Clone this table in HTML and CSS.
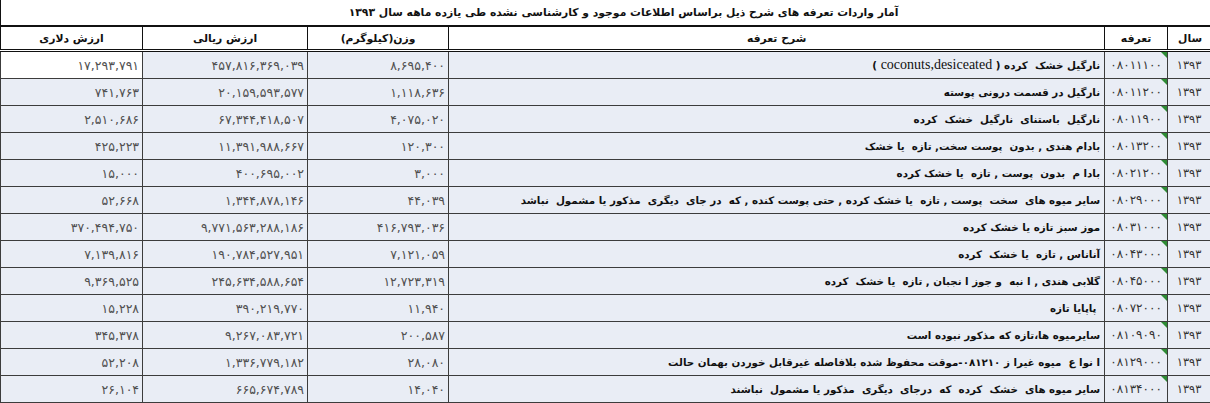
FILE: index.html
```html
<!DOCTYPE html>
<html lang="fa">
<head>
<meta charset="utf-8">
<link rel="stylesheet" href="styles.css">
</head>
<body>
<table class="sheet" dir="rtl">
  <colgroup>
    <col class="c-year"><col class="c-code"><col class="c-desc"><col class="c-weight"><col class="c-rial"><col class="c-usd">
  </colgroup>
  <thead>
    <tr class="title-row"><th colspan="6" class="title">آمار واردات تعرفه های شرح ذیل براساس اطلاعات موجود و کارشناسی نشده طی یازده ماهه سال ۱۳۹۳</th></tr>
    <tr class="head-row">
      <th class="h-year">سال</th>
      <th>تعرفه</th>
      <th>شرح تعرفه</th>
      <th>وزن(کیلوگرم)</th>
      <th>ارزش ریالی</th>
      <th>ارزش دلاری</th>
    </tr>
  </thead>
  <tbody>
    <tr><td class="year">۱۳۹۳</td><td class="code">۰۸۰۱۱۱۰۰</td><td class="desc">نارگیل خشک  کرده ( <span class="latin">coconuts,desiceated</span> )</td><td class="num">۸,۶۹۵,۴۰۰</td><td class="num">۴۵۷,۸۱۶,۳۶۹,۰۳۹</td><td class="num sel">۱۷,۲۹۳,۷۹۱</td></tr>
    <tr><td class="year">۱۳۹۳</td><td class="code">۰۸۰۱۱۲۰۰</td><td class="desc">نارگیل در قسمت درونی پوسته</td><td class="num">۱,۱۱۸,۶۳۶</td><td class="num">۲۰,۱۵۹,۵۹۳,۵۷۷</td><td class="num">۷۴۱,۷۶۳</td></tr>
    <tr><td class="year">۱۳۹۳</td><td class="code">۰۸۰۱۱۹۰۰</td><td class="desc">نارگیل  باستنای  نارگیل  خشک  کرده</td><td class="num">۴,۰۷۵,۰۲۰</td><td class="num">۶۷,۳۴۴,۴۱۸,۵۰۷</td><td class="num">۲,۵۱۰,۶۸۶</td></tr>
    <tr><td class="year">۱۳۹۳</td><td class="code">۰۸۰۱۳۲۰۰</td><td class="desc">بادام هندی , بدون  پوست سخت, تازه  یا خشک</td><td class="num">۱۲۰,۳۰۰</td><td class="num">۱۱,۳۹۱,۹۸۸,۶۶۷</td><td class="num">۴۲۵,۲۲۳</td></tr>
    <tr><td class="year">۱۳۹۳</td><td class="code">۰۸۰۲۱۲۰۰</td><td class="desc">بادا م  بدون  پوست , تازه  یا خشک کرده</td><td class="num">۳,۰۰۰</td><td class="num">۴۰۰,۶۹۵,۰۰۲</td><td class="num">۱۵,۰۰۰</td></tr>
    <tr><td class="year">۱۳۹۳</td><td class="code">۰۸۰۲۹۰۰۰</td><td class="desc">سایر میوه های  سخت  پوست , تازه  یا خشک کرده , حتی پوست کنده , که  در جای  دیگری  مذکور یا مشمول  نباشد</td><td class="num">۴۴,۰۳۹</td><td class="num">۱,۳۴۴,۸۷۸,۱۴۶</td><td class="num">۵۲,۶۶۸</td></tr>
    <tr><td class="year">۱۳۹۳</td><td class="code">۰۸۰۳۱۰۰۰</td><td class="desc">موز سبز تازه یا خشک کرده</td><td class="num">۴۱۶,۷۹۳,۰۳۶</td><td class="num">۹,۷۷۱,۵۶۳,۲۸۸,۱۸۶</td><td class="num">۳۷۰,۴۹۴,۷۵۰</td></tr>
    <tr><td class="year">۱۳۹۳</td><td class="code">۰۸۰۴۳۰۰۰</td><td class="desc">آناناس , تازه  یا خشک  کرده</td><td class="num">۷,۱۲۱,۰۵۹</td><td class="num">۱۹۰,۷۸۴,۵۲۷,۹۵۱</td><td class="num">۷,۱۳۹,۸۱۶</td></tr>
    <tr><td class="year">۱۳۹۳</td><td class="code">۰۸۰۴۵۰۰۰</td><td class="desc">گلابی هندی , ا نبه  و جوز ا نجبان , تازه  یا خشک  کرده</td><td class="num">۱۲,۷۲۳,۳۱۹</td><td class="num">۲۴۵,۶۳۴,۵۸۸,۶۵۴</td><td class="num">۹,۳۶۹,۵۲۵</td></tr>
    <tr><td class="year">۱۳۹۳</td><td class="code">۰۸۰۷۲۰۰۰</td><td class="desc"> پاپایا تازه</td><td class="num">۱۱,۹۴۰</td><td class="num">۳۹۰,۲۱۹,۷۷۰</td><td class="num">۱۵,۲۲۸</td></tr>
    <tr><td class="year">۱۳۹۳</td><td class="code">۰۸۱۰۹۰۹۰</td><td class="desc">سایرمیوه ها،تازه که مذکور نبوده است</td><td class="num">۲۰۰,۵۸۷</td><td class="num">۹,۲۶۷,۰۸۳,۷۲۱</td><td class="num">۳۴۵,۳۷۸</td></tr>
    <tr><td class="year">۱۳۹۳</td><td class="code">۰۸۱۲۹۰۰۰</td><td class="desc">ا نوا ع  میوه غیرا ز ۰۸۱۲۱۰-موقت محفوظ شده بلافاصله غیرقابل خوردن بهمان حالت</td><td class="num">۲۸,۰۸۰</td><td class="num">۱,۳۳۶,۷۷۹,۱۸۲</td><td class="num">۵۲,۲۰۸</td></tr>
    <tr><td class="year">۱۳۹۳</td><td class="code">۰۸۱۳۴۰۰۰</td><td class="desc">سایر میوه های  خشک  کرده  که  درجای  دیگری  مذکور یا مشمول  نباشند</td><td class="num">۱۴,۰۴۰</td><td class="num">۶۶۵,۶۷۴,۷۸۹</td><td class="num">۲۶,۱۰۴</td></tr>
  </tbody>
</table>
</body>
</html>
```

FILE: styles.css
```css
html, body {
  margin: 0;
  padding: 0;
  background: #ffffff;
}
body {
  font-family: "DejaVu Sans", "Noto Sans", sans-serif;
  font-size: 11px;
  color: #222;
  overflow: hidden;
}
.sheet {
  width: 1210px;
  border-collapse: collapse;
  table-layout: fixed;
}
.c-year { width: 43px; }
.c-code { width: 63px; }
.c-desc { width: 656px; }
.c-weight { width: 141px; }
.c-rial { width: 165px; }
.c-usd { width: 142px; }

.title-row th {
  height: 25px;
  padding: 0 0 0 36px;
  font-weight: bold;
  font-size: 10.8px;
  color: #111;
  text-align: center;
  border-left: 1px solid #111;
  border-right: 1px solid #111;
  border-bottom: 2px solid #111;
  background: #fff;
  white-space: nowrap;
}
.head-row th {
  height: 22px;
  padding: 0 4px;
  font-weight: bold;
  font-size: 10.8px;
  color: #111;
  text-align: center;
  border: 1px solid #111;
  border-bottom: 3px double #111;
  background: #fff;
}
.head-row .h-year {
  text-align: right;
  padding-right: 8px;
}
tbody td {
  height: 26px;
  padding: 0 4px;
  border: 1px solid #3c3c3c;
  background: #e9edf5;
  white-space: nowrap;
  overflow: hidden;
  vertical-align: middle;
}
tbody td.sel {
  background: #ffffff;
}
.num {
  text-align: right;
  direction: ltr;
  color: #505050;
  font-size: 12.5px;
  letter-spacing: 1.2px;
  padding-right: 3px;
}
.desc {
  text-align: right;
  color: #111;
  font-weight: bold;
  font-size: 10.3px;
  white-space: pre;
}
.latin {
  font-family: "Liberation Serif", serif;
  font-weight: normal;
  font-size: 14px;
}
.code {
  position: relative;
  text-align: center;
  color: #333;
  padding: 0 2px;
  font-size: 12px;
  letter-spacing: 0.8px;
}
.code::after {
  content: "";
  position: absolute;
  top: 0;
  right: 0;
  width: 0;
  height: 0;
  border-top: 6px solid #2e8b35;
  border-left: 6px solid transparent;
}
.year {
  text-align: center;
  color: #333;
  font-size: 11.5px;
}
```
